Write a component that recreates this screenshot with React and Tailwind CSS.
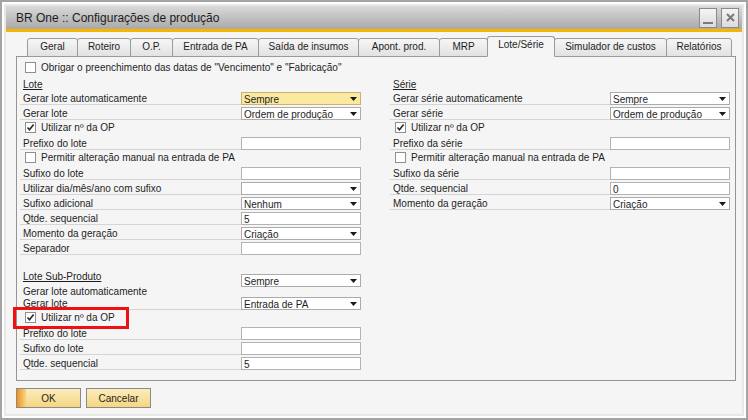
function Check({ checked }) {
  return (
    <span className="w-[11px] h-[11px] shrink-0 border border-[#8e8f8f] bg-white flex items-center justify-center">
      {checked && (
        <svg width="9" height="9" viewBox="0 0 9 9">
          <path d="M1.5 4.5 L3.5 6.8 L7.6 1.6" fill="none" stroke="#2a2a2a" strokeWidth="1.6" />
        </svg>
      )}
    </span>
  )
}

function Arrow() {
  return (
    <svg width="7" height="4" viewBox="0 0 7 4" className="shrink-0">
      <path d="M0 0 H7 L3.5 4 Z" fill="#1a1a1a" />
    </svg>
  )
}

function Select({ value, active }) {
  return (
    <div
      className={
        'w-[120px] h-[13px] shrink-0 border flex items-center justify-between pl-[2px] pr-[3px] leading-[11px] pt-px ' +
        (active ? 'bg-[#fce9a0] border-[#c4b47c]' : 'bg-white border-[#ababab]')
      }
    >
      <span>{value}</span>
      <Arrow />
    </div>
  )
}

function Input({ value }) {
  return (
    <div className="w-[120px] h-[13px] shrink-0 border border-[#b3b3b3] bg-white pl-[2px] pt-px leading-[11px]">
      {value}
    </div>
  )
}

function Row({ label, children }) {
  return (
    <div className="flex h-[15px] items-start">
      <div className="flex-1 h-[13px] border-b border-[#d5d5d5] pl-[3px] pt-px leading-[12px] whitespace-nowrap">{label}</div>
      {children}
    </div>
  )
}

function CheckRow({ label, checked }) {
  return (
    <div className="flex h-[15px] items-start pl-[5px] gap-[5px]">
      <Check checked={checked} />
      <span className="leading-[12px] whitespace-nowrap">{label}</span>
    </div>
  )
}

function Header({ children }) {
  return <div className="h-[15px] pl-[3px] leading-[15px]"><span className="underline">{children}</span></div>
}

const tabs = [
  ['Geral', 'w-[51px]'],
  ['Roteiro', 'w-[54px]'],
  ['O.P.', 'w-[43px]'],
  ['Entrada de PA', 'w-[87px]'],
  ['Saída de insumos', 'w-[101px]'],
  ['Apont. prod.', 'w-[82px]'],
  ['MRP', 'w-[49px]'],
  ['Lote/Série', 'w-[68px]', true],
  ['Simulador de custos', 'w-[113px]'],
  ['Relatórios', 'w-[66px]'],
]

export default function App() {
  return (
    <div className="w-[748px] h-[420px] border-2 border-[#a4a4a4] text-[10px] text-[#1e1e1e] font-['Liberation_Sans',Arial,sans-serif]">
      <div className="h-full border-2 border-white">
        <div className="h-full border-2 border-[#e8e8e8] flex flex-col">
          {/* title bar */}
          <div className="h-[23px] shrink-0 bg-gradient-to-b from-[#dadada] to-[#a9a9a9] flex items-center justify-between pl-[10px] pr-[3px]">
            <span className="text-[12px] text-[#1c1c1c] leading-none">BR One :: Configurações de produção</span>
            <div className="flex gap-[4px]">
              <div className="w-[18px] h-[20px] border border-[#8a8a8a] bg-gradient-to-b from-[#f4f4f4] to-[#dcdcdc] flex items-end justify-center pb-[3px]">
                <span className="w-[10px] h-[2px] bg-[#7a7a7a]" />
              </div>
              <div className="w-[18px] h-[20px] border border-[#8a8a8a] bg-gradient-to-b from-[#f4f4f4] to-[#dcdcdc] flex items-center justify-center">
                <svg width="9" height="9" viewBox="0 0 9 9">
                  <path d="M1 1 L8 8 M8 1 L1 8" stroke="#7a7a7a" strokeWidth="2" />
                </svg>
              </div>
            </div>
          </div>
          <div className="h-[3px] shrink-0 bg-[#f7b500]" />

          {/* body */}
          <div className="flex-1 bg-[#f5f5f5] pl-[10px] pr-[6px] pt-[4px]">
            <div className="flex items-end h-[21px] pl-[11px]">
              {tabs.map(([name, w, active], i) => (
                <div
                  key={name}
                  className={
                    w +
                    ' shrink-0 border border-[#9b9b9b] rounded-t-[3px] flex items-center justify-center leading-none ' +
                    (i > 0 ? '-ml-px ' : '') +
                    (active
                      ? 'h-[21px] relative z-10 bg-[#f5f5f5] border-b-[#f5f5f5] pb-[3px]'
                      : 'h-[19px] bg-gradient-to-b from-[#f6f6f6] to-[#e2e2e2] pb-[1px]')
                  }
                >
                  {name}
                </div>
              ))}
            </div>
            <div className="-mt-px h-[325px] border border-[#959595] pl-[3px] pr-[5px] pt-[3px]">
              <div className="flex h-[15px] items-center pl-[5px] gap-[5px]">
                <Check />
                <span className="leading-[11px]">Obrigar o preenchimento das datas de "Vencimento" e "Fabricação"</span>
              </div>
              <div className="mt-[2px] flex justify-between">
                {/* Lote */}
                <div className="w-[341px]">
                  <Header>Lote</Header>
                  <Row label="Gerar lote automaticamente"><Select value="Sempre" active /></Row>
                  <Row label="Gerar lote"><Select value="Ordem de produção" /></Row>
                  <CheckRow label="Utilizar nº da OP" checked />
                  <Row label="Prefixo do lote"><Input /></Row>
                  <CheckRow label="Permitir alteração manual na entrada de PA" />
                  <Row label="Sufixo do lote"><Input /></Row>
                  <Row label="Utilizar dia/mês/ano com sufixo"><Select value="" /></Row>
                  <Row label="Sufixo adicional"><Select value="Nenhum" /></Row>
                  <Row label="Qtde. sequencial"><Input value="5" /></Row>
                  <Row label="Momento da geração"><Select value="Criação" /></Row>
                  <Row label="Separador"><Input /></Row>

                  <div className="mt-[14px] flex justify-between h-[15px]">
                    <span className="pl-[3px] leading-[11px] underline">Lote Sub-Produto</span>
                    <div className="mt-[3px]"><Select value="Sempre" /></div>
                  </div>
                  <div className="h-[11px] pl-[3px] leading-[11px]">Gerar lote automaticamente</div>
                  <Row label="Gerar lote"><Select value="Entrada de PA" /></Row>
                  <div className="relative">
                    <CheckRow label="Utilizar nº da OP" checked />
                    <div className="absolute left-[-7px] top-[-5px] w-[116px] h-[22px] border-[3px] border-[#f01010]" />
                  </div>
                  <Row label="Prefixo do lote"><Input /></Row>
                  <Row label="Sufixo do lote"><Input /></Row>
                  <Row label="Qtde. sequencial"><Input value="5" /></Row>
                </div>

                {/* Série */}
                <div className="w-[340px]">
                  <Header>Série</Header>
                  <Row label="Gerar série automaticamente"><Select value="Sempre" /></Row>
                  <Row label="Gerar série"><Select value="Ordem de produção" /></Row>
                  <CheckRow label="Utilizar nº da OP" checked />
                  <Row label="Prefixo da série"><Input /></Row>
                  <CheckRow label="Permitir alteração manual na entrada de PA" />
                  <Row label="Sufixo da série"><Input /></Row>
                  <Row label="Qtde. sequencial"><Input value="0" /></Row>
                  <Row label="Momento da geração"><Select value="Criação" /></Row>
                </div>
              </div>
            </div>

            <div className="mt-[7px] flex gap-[5px]">
              <button className="relative w-[65px] h-[20px] border border-[#8a8a8a] bg-gradient-to-b from-[#fcedbe] to-[#f5d680] overflow-hidden">
                <span className="absolute left-0 top-0 h-full w-[9px] bg-gradient-to-r from-[#f0900c] to-[#f5d680]" />
                <span className="relative">OK</span>
              </button>
              <button className="w-[65px] h-[20px] border border-[#8a8a8a] bg-gradient-to-b from-[#fcedbe] to-[#f5d680]">
                Cancelar
              </button>
            </div>
          </div>
        </div>
      </div>
    </div>
  )
}
